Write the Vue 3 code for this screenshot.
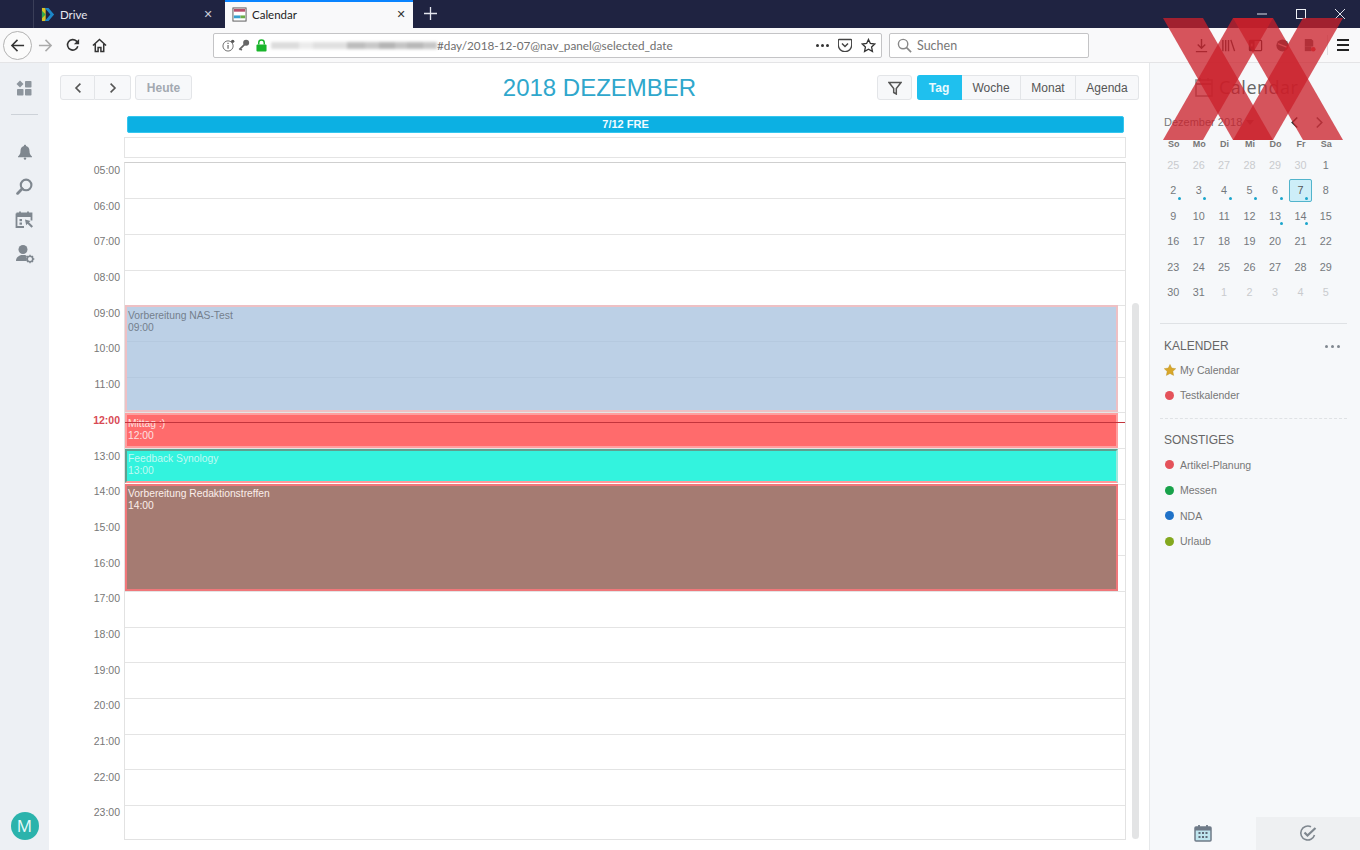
<script setup>
const hours = ['05:00','06:00','07:00','08:00','09:00','10:00','11:00','12:00','13:00','14:00','15:00','16:00','17:00','18:00','19:00','20:00','21:00','22:00','23:00']
const events = [
  { cls: 'ev-blue', title: 'Vorbereitung NAS-Test', time: '09:00', top: 142, height: 107 },
  { cls: 'ev-red', title: 'Mittag :)', time: '12:00', top: 250, height: 35 },
  { cls: 'ev-teal', title: 'Feedback Synology', time: '13:00', top: 286, height: 34 },
  { cls: 'ev-brown', title: 'Vorbereitung Redaktionstreffen', time: '14:00', top: 321, height: 107 }
]
const week = ['So','Mo','Di','Mi','Do','Fr','Sa']
const prev = [25,26,27,28,29,30]
const next = [1,2,3,4,5]
const days = [
  ...prev.map(n => ({ n, muted: true })),
  ...Array.from({ length: 31 }, (_, i) => ({ n: i + 1, dot: [2,3,4,5,6,7,13,14].includes(i + 1), sel: i === 6 })),
  ...next.map(n => ({ n, muted: true }))
]
const others = [
  { name: 'Artikel-Planung', color: '#e4525a' },
  { name: 'Messen', color: '#18a24a' },
  { name: 'NDA', color: '#1f72c8' },
  { name: 'Urlaub', color: '#83a81e' }
]
const blur = [
  ['28px','#dcdcdc'],['14px','#ececec'],['34px','#e0e0e0'],['18px','#bdbdbd'],['14px','#c8c8c8'],['16px','#b4b4b4'],['12px','#c4c4c4'],['16px','#b8b8b8'],['14px','#c6c6c6']
]
const xBands = [
  '1163,18 1203,18 1273,140 1233,140',
  '1233,18 1273,18 1203,140 1163,140',
  '1233,18 1273,18 1343,140 1303,140',
  '1303,18 1343,18 1273,140 1233,140'
]
</script>

<template>
  <div class="page">
    <div class="tabs">
      <div class="tab tab-drive">
        <svg class="fav" viewBox="0 0 16 16" width="15" height="15">
          <path d="M1 1h4v14H1z" fill="#d8c225"/><path d="M4 1h4l6 7-6 7H4l6-7z" fill="#1c86c8"/><path d="M1 4l4 4-4 4z" fill="#31a84f"/>
        </svg>
        <span class="tab-title">Drive</span>
        <span class="tab-x">✕</span>
      </div>
      <div class="tab tab-active">
        <svg class="fav" viewBox="0 0 16 16" width="15" height="15">
          <rect x="1" y="1" width="14" height="14" fill="#fff" stroke="#555"/><rect x="2" y="2" width="12" height="3" fill="#b8506b"/>
          <rect x="2" y="9" width="7" height="3" fill="#38a0cf"/><rect x="9" y="9" width="5" height="3" fill="#6cae4a"/>
        </svg>
        <span class="tab-title dark">Calendar</span>
        <span class="tab-x dark">✕</span>
      </div>
      <svg class="plus" viewBox="0 0 14 14" width="13" height="13"><path d="M7 0v14M0 7h14" stroke="#e4e6ee" stroke-width="1.4"/></svg>
      <div class="win">
        <svg viewBox="0 0 10 10" width="10" height="10"><path d="M0 5h10" stroke="#dfe1ea" stroke-width="1"/></svg>
        <svg viewBox="0 0 10 10" width="10" height="10"><rect x=".5" y=".5" width="9" height="9" fill="none" stroke="#eef0f5"/></svg>
        <svg viewBox="0 0 10 10" width="10" height="10"><path d="M0 0l10 10M10 0L0 10" stroke="#dfe1ea"/></svg>
      </div>
    </div>

    <div class="toolbar">
      <div class="back">
        <svg viewBox="0 0 16 16" width="15" height="15"><path d="M15 8H2M8 2L2 8l6 6" fill="none" stroke="#333" stroke-width="1.6"/></svg>
      </div>
      <svg class="tb fwd" viewBox="0 0 16 16" width="15" height="15"><path d="M1 8h13M8 2l6 6-6 6" fill="none" stroke="#aaa" stroke-width="1.6"/></svg>
      <svg class="tb rel" viewBox="0 0 16 16" width="14" height="14"><path d="M13.5 9.5A6 6 0 1 1 12 3.6L14 6" fill="none" stroke="#333" stroke-width="1.8"/><path d="M15 1v6H9z" fill="#333"/></svg>
      <svg class="tb home" viewBox="0 0 16 16" width="15" height="15"><path d="M1 8l7-6.5L15 8M3.5 6.5V14.5h3V10h3v4.5h3v-8" fill="none" stroke="#333" stroke-width="1.6"/></svg>
      <div class="url">
        <svg viewBox="0 0 14 14" width="13" height="13" class="i-info"><circle cx="6.5" cy="7.5" r="5.5" fill="none" stroke="#666"/><path d="M6.5 6.5v4M6.5 4v1.3" stroke="#666" stroke-width="1.3"/><circle cx="11.5" cy="2.5" r="1.8" fill="#555"/></svg>
        <svg viewBox="0 0 14 14" width="12" height="12" class="i-key"><circle cx="9.5" cy="4.5" r="3.5" fill="#666"/><path d="M7.5 6.5L1.5 12.5M2.5 11.5l2 1.5" stroke="#666" stroke-width="2"/></svg>
        <svg viewBox="0 0 12 14" width="11" height="13" class="i-lock"><path d="M3 6V4a3 3 0 0 1 6 0v2" fill="none" stroke="#19b52b" stroke-width="1.6"/><rect x="0.5" y="6" width="11" height="7.5" rx="1" fill="#19b52b"/></svg>
        <div class="blurred"><i v-for="(b, i) in blur" :key="i" class="blur-seg" :style="{ width: b[0], background: b[1] }"></i></div>
        <span class="url-text">#day/2018-12-07@nav_panel@selected_date</span>
        <span class="url-dots"><b></b><b></b><b></b></span>
        <svg viewBox="0 0 14 14" width="14" height="14" class="i-pocket"><path d="M1 1.5h12a.7.7 0 0 1 .7.7V7a6.7 6.7 0 0 1-13.4 0V2.2A.7.7 0 0 1 1 1.5z" fill="none" stroke="#444" stroke-width="1.3"/><path d="M4 5.5l3 3 3-3" fill="none" stroke="#444" stroke-width="1.5"/></svg>
        <svg viewBox="0 0 16 16" width="15" height="15" class="i-star"><path d="M8 1.5l2 4.3 4.7.6-3.4 3.2.9 4.7L8 11.9l-4.2 2.4.9-4.7L1.3 6.4 6 5.8z" fill="none" stroke="#333" stroke-width="1.4"/></svg>
      </div>
      <div class="search">
        <svg viewBox="0 0 16 16" width="15" height="15"><circle cx="6.5" cy="6.5" r="5" fill="none" stroke="#888" stroke-width="1.5"/><path d="M10 10l5 5" stroke="#888" stroke-width="1.8"/></svg>
        <span>Suchen</span>
      </div>
      <div class="tb-right">
        <svg viewBox="0 0 16 16" width="15" height="15"><path d="M8 1v9M4 7l4 4 4-4M2 14.5h12" fill="none" stroke="#444" stroke-width="1.5"/></svg>
        <svg viewBox="0 0 16 16" width="15" height="15"><path d="M2 2v12M5 2v12M8 2v12M10.5 2l4 12" fill="none" stroke="#444" stroke-width="1.5"/></svg>
        <svg viewBox="0 0 16 16" width="15" height="15"><rect x="1.5" y="2.5" width="13" height="11" rx="1" fill="none" stroke="#333" stroke-width="1.3"/><rect x="2" y="3" width="5" height="10" fill="#333"/><rect x="3" y="6" width="2" height="3" fill="#fff"/></svg>
        <svg viewBox="0 0 16 16" width="15" height="15"><circle cx="8" cy="8" r="6.5" fill="#555"/><path d="M3 6l10 4" stroke="#f4c4c4" stroke-width="1.2"/></svg>
        <svg viewBox="0 0 16 16" width="15" height="15"><path d="M3 1h7l2 2v6H3z" fill="#666"/><rect x="3" y="9" width="7" height="5" fill="#666"/><circle cx="12" cy="12" r="2.5" fill="#d44"/></svg>
        <i class="tb-sep"></i>
        <div class="burger"><b></b><b></b><b></b></div>
      </div>
    </div>

    <div class="app">
      <aside class="rail">
        <svg class="r-apps" viewBox="0 0 16 16" width="16" height="16">
          <path d="M4 .5L7.5 4 4 7.5.5 4z" fill="#8d959d"/><rect x="9" y="1" width="6.5" height="6.5" rx=".8" fill="#8d959d"/><rect x="1" y="9" width="6.5" height="6.5" rx=".8" fill="#8d959d"/><rect x="9" y="9" width="6.5" height="6.5" rx=".8" fill="#8d959d"/>
        </svg>
        <i class="r-div"></i>
        <svg class="r-ic r-bell" viewBox="0 0 16 16" width="16" height="16"><path d="M8 .8c.7 0 1.1.5 1.1 1.1C11.5 2.5 12.5 4.5 12.5 7c0 3 1 4 2.5 5.5v.7H1v-.7C2.5 11 3.5 10 3.5 7c0-2.5 1-4.5 3.4-5.1C6.900 1.300 7.300.8 8 .8z" fill="#7f878f"/><circle cx="8" cy="14.6" r="1.2" fill="#7f878f"/></svg>
        <svg class="r-ic r-search" viewBox="0 0 16 16" width="17" height="17"><circle cx="9.5" cy="6.5" r="5" fill="none" stroke="#7f878f" stroke-width="2"/><path d="M5.8 10.2L1.5 14.5" stroke="#7f878f" stroke-width="2.6" stroke-linecap="round"/></svg>
        <svg class="r-ic r-cal" viewBox="0 0 20 20" width="20" height="20"><path d="M1.5 3.5h15v7M9 17H1.5V3.5" fill="none" stroke="#7f878f" stroke-width="1.8"/><path d="M1.5 3.5h15V7h-15z" fill="#7f878f"/><path d="M5 1.5v3M13 1.5v3" stroke="#7f878f" stroke-width="1.8"/><rect x="4.5" y="9" width="2.5" height="2.2" fill="#7f878f"/><rect x="4.5" y="12.5" width="2.5" height="2.2" fill="#7f878f"/><path d="M10 9.5l5.5 1.5-1.5 1.3 4 4-1.5 1.5-4-4-1.3 1.5z" fill="#7f878f"/></svg>
        <svg class="r-ic" viewBox="0 0 20 20" width="20" height="20"><circle cx="8" cy="5.5" r="4.5" fill="#7f878f"/><path d="M1 17c0-3.5 2.5-5 5-6h4c1 .4 1.500.8 2 1.300-.8 1.300-.8 3.200 0 4.700z" fill="#7f878f"/><circle cx="15" cy="15" r="2.8" fill="none" stroke="#7f878f" stroke-width="1.6"/><path d="M15 10.8v1.500M15 17.800v1.500M10.800 15h1.500M17.800 15h1.500M12 12l1 1M17 17l1 1M18 12l-1 1M13 17l-1 1" stroke="#7f878f" stroke-width="1.3"/></svg>
        <div class="avatar">M</div>
      </aside>

      <main class="main">
        <header class="head">
          <div class="head-left">
            <div class="grp">
              <button class="btn nav"><svg viewBox="0 0 10 14" width="8" height="12"><path d="M8 1.5L2.5 7 8 12.5" fill="none" stroke="#555" stroke-width="2"/></svg></button>
              <button class="btn nav"><svg viewBox="0 0 10 14" width="8" height="12"><path d="M2 1.5L7.5 7 2 12.5" fill="none" stroke="#555" stroke-width="2"/></svg></button>
            </div>
            <button class="btn today">Heute</button>
          </div>
          <h1 class="title">2018 DEZEMBER</h1>
          <div class="head-right">
            <button class="btn filter"><svg viewBox="0 0 14 14" width="14" height="14"><path d="M1 1.5h12L8.3 7.5V13L5.7 11.5v-4z" fill="none" stroke="#555" stroke-width="1.5"/></svg></button>
            <div class="grp views">
              <button class="btn v on v-tag">Tag</button>
              <button class="btn v v-woche">Woche</button>
              <button class="btn v v-monat">Monat</button>
              <button class="btn v v-agenda">Agenda</button>
            </div>
          </div>
        </header>

        <div class="allday-bar">7/12 FRE</div>
        <div class="allday-box"></div>

        <div class="body">
          <div class="labels">
            <div v-for="h in hours" :key="h" class="label" :class="{ now: h === '12:00' }">{{ h }}</div>
          </div>
          <div class="grid">
            <div v-for="h in hours" :key="h" class="row"></div>
            <div
              v-for="e in events"
              :key="e.title"
              class="event"
              :class="e.cls"
              :style="{ top: e.top + 'px', height: e.height + 'px' }"
            >
              <div>{{ e.title }}</div>
              <div>{{ e.time }}</div>
            </div>
            <i class="now-line"></i>
          </div>
          <div class="scrollbar"></div>
        </div>
      </main>

      <aside class="side">
        <div class="side-head">
          <svg viewBox="0 0 18 20" width="18" height="20"><rect x="1" y="3" width="16" height="16" fill="none" stroke="#888" stroke-width="1.5"/><path d="M1 7h16" stroke="#888" stroke-width="2"/><path d="M5 1v3M13 1v3" stroke="#888" stroke-width="1.5"/></svg>
          <span>Calendar</span>
        </div>
        <div class="month-row">
          <span class="month">Dezember 2018</span>
          <i class="caret"></i>
          <svg class="m-prev" viewBox="0 0 10 14" width="9" height="13"><path d="M8 1.5L2.5 7 8 12.5" fill="none" stroke="#333" stroke-width="1.8"/></svg>
          <svg class="m-next" viewBox="0 0 10 14" width="9" height="13"><path d="M2 1.5L7.5 7 2 12.5" fill="none" stroke="#666" stroke-width="1.8"/></svg>
        </div>
        <div class="weeks"><span v-for="w in week" :key="w">{{ w }}</span></div>
        <div class="days">
          <span
            v-for="(d, i) in days"
            :key="i"
            class="day"
            :class="{ muted: d.muted, sel: d.sel }"
          >{{ d.n }}<i v-if="d.dot" class="dot"></i></span>
        </div>

        <i class="s-line"></i>
        <div class="sec sec-k">
          <span>KALENDER</span>
          <span class="more"><b></b><b></b><b></b></span>
        </div>
        <div class="cal-item">
          <svg class="star" viewBox="0 0 14 14" width="12" height="12"><path d="M7 .5l2 4.3 4.7.6-3.4 3.2.9 4.7L7 11l-4.2 2.3.9-4.7L.3 5.4 5 4.8z" fill="#d9a72a" stroke="#b98f20" stroke-width=".5"/></svg>
          My Calendar
        </div>
        <div class="cal-item"><i class="bullet" style="background:#e4525a"></i>Testkalender</div>
        <i class="s-dash"></i>
        <div class="sec sec-s"><span>SONSTIGES</span></div>
        <div v-for="o in others" :key="o.name" class="cal-item">
          <i class="bullet" :style="{ background: o.color }"></i>{{ o.name }}
        </div>

        <div class="side-tabs">
          <div class="s-tab">
            <svg viewBox="0 0 18 18" width="18" height="18"><rect x="1" y="3" width="16" height="14" rx="1" fill="#bfe6ee" stroke="#6f7b88" stroke-width="1.5"/><path d="M1 3h16v3.5H1z" fill="#6f7b88"/><path d="M5 1v3M13 1v3" stroke="#6f7b88" stroke-width="1.8"/><path d="M4.5 8h2v2h-2zM8 8h2v2H8zM11.5 8h2v2h-2zM4.5 12h2v2h-2zM8 12h2v2H8zM11.5 12h2v2h-2z" fill="#5f6b78"/></svg>
          </div>
          <div class="s-tab on">
            <svg viewBox="0 0 18 18" width="18" height="18"><path d="M15.5 11A7 7 0 1 1 12 2.800" fill="none" stroke="#7f878f" stroke-width="1.6"/><path d="M5.5 8.5l3 3L16.500 4" fill="none" stroke="#7f878f" stroke-width="2.2"/></svg>
          </div>
        </div>
      </aside>
    </div>

    <svg class="xx" width="1360" height="850" viewBox="0 0 1360 850">
      <polygon v-for="(p, i) in xBands" :key="i" :points="p" fill="rgba(203,32,42,.76)"/>
    </svg>
  </div>
</template>

<style>
html, body { margin: 0; padding: 0; background: #fff; overflow: hidden; }
</style>

<style scoped>
.page { position: relative; width: 1360px; height: 850px; overflow: hidden; font-family: "Liberation Sans", Arial, sans-serif; }

/* tabs */
.tabs { height: 28px; background: #1f2341; display: flex; padding-left: 33px; box-sizing: border-box; align-items: stretch; }
.tab { display: flex; align-items: center; box-sizing: border-box; font-family: Lato, sans-serif; font-size: 11.5px; }
.tab-drive { width: 192px; border-left: 1px solid #3a3e58; padding: 0 12px 0 7px; }
.tab-active { width: 188px; background: #f9f9fa; border-top: 2px solid #0a84ff; padding: 0 7px 2px 7px; }
.fav { flex: none; margin-right: 4px; }
.tab-active .fav { margin-right: 5px; }
.tab-title { color: #e8e9ef; flex: 1; }
.tab-title.dark { color: #222; }
.tab-x { color: #c9cbd6; font-size: 11px; width: 10px; text-align: center; font-family: "DejaVu Sans", sans-serif; }
.tab-x.dark { color: #333; }
.plus { margin: 7px 0 0 11px; }
.win { margin-left: auto; display: flex; gap: 29px; padding: 9px 15px 0 0; height: 10px; }

/* toolbar */
.toolbar { height: 35px; background: #f9f9fa; border-bottom: 1px solid #e4e4e6; box-sizing: border-box; display: flex; align-items: center; position: relative; }
.back { width: 27px; height: 27px; border: 1px solid #b2b2b2; border-radius: 50%; background: #fbfbfb; display: flex; align-items: center; justify-content: center; margin-left: 3px; flex: none; }
.tb { flex: none; }
.fwd { margin-left: 6px; }
.rel { margin-left: 13px; }
.home { margin-left: 12px; }
.url { width: 669px; height: 25px; margin-left: 106px; background: #fff; border: 1px solid #c4c4c6; border-radius: 2px; box-sizing: border-box; display: flex; align-items: center; flex: none; }
.i-info { margin-left: 8px; }
.i-key { margin-left: 3px; }
.i-lock { margin-left: 6px; }
.blurred { display: flex; margin-left: 4px; height: 7px; filter: blur(1.5px); width: 165px; flex: none; }
.blur-seg { display: block; flex: none; height: 7px; }
.url-text { font-family: Lato, sans-serif; font-size: 11.75px; color: #6f6f6f; white-space: nowrap; margin-left: 1px; flex: 1; }
.url-dots { display: flex; gap: 2px; margin-right: 9px; }
.url-dots b { width: 3px; height: 3px; border-radius: 50%; background: #333; display: block; }
.i-pocket { margin-right: 9px; }
.i-star { margin-right: 5px; }
.search { width: 200px; height: 25px; margin-left: 7px; background: #fff; border: 1px solid #c4c4c6; border-radius: 2px; box-sizing: border-box; display: flex; align-items: center; padding-left: 7px; gap: 5px; font-family: Lato, sans-serif; font-size: 12.5px; color: #777; flex: none; }
.tb-right { display: flex; align-items: center; margin-left: 105px; gap: 12px; }
.tb-sep { width: 1px; height: 20px; background: #e0e0e2; margin: 0 -3px 0 -2px; }
.burger { display: flex; flex-direction: column; gap: 3px; }
.burger b { display: block; width: 12px; height: 2px; background: #222; }

/* app */
.app { display: flex; height: 787px; }
.rail { width: 49px; flex: none; background: #edf0f4; display: flex; flex-direction: column; align-items: center; box-sizing: border-box; padding-top: 17px; }
.r-apps { margin-left: -1px; }
.r-div { width: 27px; height: 1px; background: #cdd2d8; margin: 18px 0 29px; }
.r-ic { display: block; flex: none; }
.r-bell { margin-bottom: 18px; }
.r-search { margin-bottom: 15px; }
.r-cal { margin-bottom: 14px; }
.avatar { margin-top: auto; margin-bottom: 10px; width: 28px; height: 28px; border-radius: 50%; background: #2bb3ac; color: #eafafa; font-size: 17px; font-family: "Open Sans", sans-serif; line-height: 28px; text-align: center; }

.main { width: 1101px; flex: none; box-sizing: border-box; padding: 12px 10px 0 11px; background: #fff; border-right: 1px solid #e6e8ea; }
.head { display: grid; grid-template-columns: 1fr auto 1fr; align-items: center; height: 25px; }
.head-left, .head-right { display: flex; gap: 4px; }
.head-right { justify-content: flex-end; gap: 5px; }
.title { margin: 0; font-weight: 400; font-size: 24px; color: #2fa7cc; white-space: nowrap; line-height: 25px; }
.grp { display: flex; }
.btn { height: 25px; box-sizing: border-box; border: 1px solid #e3e5e8; background: #f7f8fa; border-radius: 3px; padding: 0; font-family: "Liberation Sans", Arial, sans-serif; font-size: 12px; color: #555; display: flex; align-items: center; justify-content: center; }
.nav { width: 35px; border-radius: 0; }
.nav:first-child { border-radius: 3px 0 0 3px; }
.nav:last-child { border-radius: 0 3px 3px 0; border-left: 0; width: 36px; }
.today { width: 57px; font-weight: 700; color: #a3a9b1; }
.filter { width: 35px; }
.v { border-radius: 0; border-left: 0; }
.v:last-child { border-radius: 0 3px 3px 0; }
.v.on { background: #1fc0ee; border-color: #1fc0ee; color: #e8faff; font-weight: 700; border-radius: 3px 0 0 3px; }
.v-tag { width: 45px; }
.v-woche { width: 59px; }
.v-monat { width: 55px; }
.v-agenda { width: 63px; }

.allday-bar { margin: 16px 0 0 67px; width: 997px; height: 17px; box-sizing: border-box; background: #0cb0e3; border: 1px solid #35c6ee; border-radius: 2px; color: #f2fbff; font-weight: 700; font-size: 11px; line-height: 15px; text-align: center; }
.allday-box { margin: 4px 0 0 64px; width: 1002px; height: 21px; box-sizing: border-box; border: 1px solid #e4e4e4; }

.body { display: flex; margin-top: 4px; }
.labels { width: 60px; flex: none; padding-top: 1px; box-sizing: border-box; }
.label { height: 35.7px; font-size: 10.5px; line-height: 14px; color: #777; text-align: right; box-sizing: border-box; }
.label.now { color: #d84a55; font-weight: 700; }
.grid { position: relative; width: 1002px; height: 678px; margin-left: 4px; flex: none; box-sizing: border-box; border: 1px solid #e2e2e2; border-top-color: #cfcfcf; overflow: hidden; }
.row { height: 35.7px; box-sizing: border-box; border-top: 1px solid #e4e4e4; }
.row:first-child { border-top: 0; height: 35.3px; }
.event { position: absolute; left: 0; width: 993px; box-sizing: border-box; padding: 2px 0 0 1px; font-size: 10.3px; line-height: 12px; border: 2px solid; }
.ev-blue { background: rgba(165,192,221,.75); border-color: #eec0c4; color: #747f8d; padding-top: 3px; }
.ev-red { background: #ff6b6c; border-color: #ff9e9f; color: #fde1e1; padding-top: 2.5px; }
.ev-teal { background: #33f3de; border-color: #5fa08f #9fe8dc #ff9a9a #5fa08f; color: #bffaf3; }
.ev-brown { background: #a57b72; border-color: #f0777a; color: #fbeeea; }
.now-line { position: absolute; left: 0; right: 0; top: 259px; height: 1px; background: #c3343c; }
.scrollbar { margin: 141px 0 0 6px; width: 7px; height: 536px; border-radius: 4px; background: #e3e4e5; flex: none; }

/* sidebar */
.side { width: 210px; flex: none; background: #f6f8fa; display: flex; flex-direction: column; position: relative; box-sizing: border-box; }
.side-head { height: 48px; display: flex; align-items: center; padding-left: 45px; gap: 6px; color: #666; font-family: "Open Sans", sans-serif; font-size: 18px; letter-spacing: .5px; }
.month-row { display: flex; align-items: center; height: 22px; padding-left: 14px; font-size: 11px; color: #777; }
.month { white-space: nowrap; }
.caret { width: 0; height: 0; border: 4px solid transparent; border-top: 5px solid #777; border-bottom: 0; margin-left: 4px; }
.m-prev { margin-left: 36px; }
.m-next { margin-left: 16px; }
.weeks { display: grid; grid-template-columns: repeat(7, 25.45px); padding-left: 11px; margin-top: 2px; height: 17px; align-items: center; font-size: 9px; font-weight: 700; color: #777; text-align: center; }
.days { display: grid; grid-template-columns: repeat(7, 25.45px); grid-auto-rows: 25.5px; padding-left: 10.5px; }
.day { position: relative; display: flex; align-items: center; justify-content: center; font-size: 10.8px; color: #75787d; }
.day.muted { color: #c9cbce; }
.day.sel { background: #cdeef8; outline: 1px solid #52b4cc; outline-offset: -1px; border-radius: 2px; margin: 1px; color: #555; }
.dot { position: absolute; left: 17.5px; top: 19px; width: 3px; height: 3px; border-radius: 50%; background: #1ba5cc; }
.day.sel .dot { left: 16.5px; top: 18px; }
.s-line { display: block; height: 1px; background: #dfe2e5; margin: 18px 13px 0 10px; }
.sec { padding: 0 14px; font-size: 12px; color: #666; display: flex; justify-content: space-between; align-items: center; height: 20px; }
.sec-k { margin: 12px 0 1px; padding-right: 20px; }
.sec-s { margin: 11px 0 2px; }
.more { display: flex; gap: 3px; }
.more b { display: block; width: 3px; height: 3px; border-radius: 50%; background: #808890; }
.cal-item { display: flex; align-items: center; height: 25.5px; padding-left: 14px; font-size: 10.5px; color: #777; }
.star { margin: 0 4px 0 0; flex: none; }
.bullet { width: 9px; height: 9px; border-radius: 50%; margin: 0 6px 0 1px; flex: none; display: block; }
.s-dash { display: block; height: 0; border-top: 1px dashed #dfe2e5; margin: 10px 13px 0 10px; }
.side-tabs { margin-top: auto; display: flex; height: 33px; }
.s-tab { display: flex; align-items: center; justify-content: center; box-sizing: border-box; padding-bottom: 1px; }
.s-tab:first-child { width: 106px; }
.s-tab.on { background: #eef0f2; width: 104px; }

.xx { position: absolute; left: 0; top: 0; pointer-events: none; }
</style>
